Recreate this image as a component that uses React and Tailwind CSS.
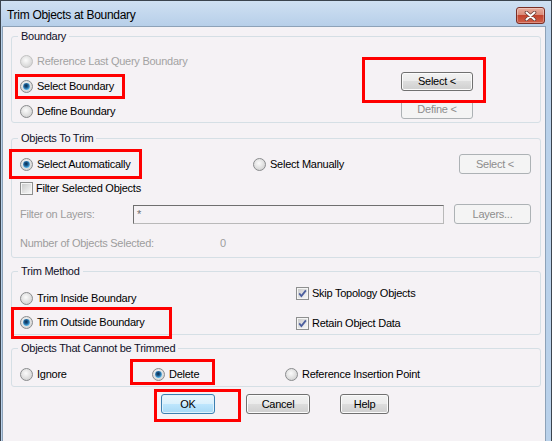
import clsx from 'clsx';

const Radio = ({ checked, disabled }) => (
  <svg width="13" height="13" viewBox="0 0 13 13" className="shrink-0">
    <defs>
      <radialGradient id="rfill" cx="45%" cy="40%" r="65%">
        <stop offset="0" stopColor="#fbfbfb" />
        <stop offset="1" stopColor="#cfcfcf" />
      </radialGradient>
      <radialGradient id="rdot" cx="45%" cy="40%" r="60%">
        <stop offset="0" stopColor="#0b2a48" />
        <stop offset="0.5" stopColor="#1d5e93" />
        <stop offset="1" stopColor="#5bbcf0" />
      </radialGradient>
    </defs>
    <circle cx="6.5" cy="6.5" r="6" fill="url(#rfill)" stroke={disabled ? '#c2c2c2' : '#8a8c8e'} />
    {checked && <circle cx="6.5" cy="6.5" r="3.4" fill="url(#rdot)" />}
  </svg>
);

const Checkbox = ({ checked }) => (
  <svg width="13" height="13" viewBox="0 0 13 13" className="shrink-0">
    <defs>
      <linearGradient id="cbfill" x1="0" y1="0" x2="1" y2="1">
        <stop offset="0" stopColor="#cbcbcb" />
        <stop offset="1" stopColor="#f7f7f7" />
      </linearGradient>
    </defs>
    <rect x="0.5" y="0.5" width="12" height="12" fill="#f5f5f5" stroke="#8e8f8f" />
    <rect x="2" y="2" width="9" height="9" fill="url(#cbfill)" />
    {checked && (
      <path d="M3.2 6.4 L5.4 9 L9.9 3.4" fill="none" stroke="#4c5f9e" strokeWidth="1.8" />
    )}
  </svg>
);

const RadioRow = ({ label, checked, disabled }) => (
  <div className="flex h-[20px] items-center gap-[4px]">
    <Radio checked={checked} disabled={disabled} />
    <span className={clsx('whitespace-nowrap', disabled ? 'text-[#a3a3a3]' : 'text-black')}>{label}</span>
  </div>
);

const CheckRow = ({ label, checked }) => (
  <div className="flex h-[20px] items-center gap-[3px]">
    <Checkbox checked={checked} />
    <span className="whitespace-nowrap text-black">{label}</span>
  </div>
);

const Btn = ({ children, disabled, focused, className }) => (
  <div
    className={clsx(
      'flex items-center justify-center rounded-[3px] border whitespace-nowrap',
      disabled && 'border-[#adb2b5] bg-[#f4f4f4] text-[#8d8d8d]',
      focused &&
        'border-[#3c7fb1] bg-[linear-gradient(#eaf6fd,#d9f0fc_50%,#bee6fd_50%,#a7d9f5)] text-black shadow-[inset_0_0_0_1px_#dff2fc]',
      !disabled &&
        !focused &&
        'border-[#707070] bg-[linear-gradient(#f2f2f2,#ebebeb_50%,#dddddd_50%,#cfcfcf)] text-black shadow-[inset_0_0_0_1px_#fbfbfb]',
      className
    )}
  >
    {children}
  </div>
);

const Group = ({ title, className, children }) => (
  <fieldset className={clsx('m-0 min-w-0 rounded-[3px] border border-[#d5dfe5] p-0', className)}>
    <legend className="ml-[6px] h-[14px] px-[3px] leading-[14px] text-[#101028]">{title}</legend>
    {children}
  </fieldset>
);

const Mark = ({ className }) => (
  <div className={clsx('pointer-events-none absolute border-[3px] border-[#ff0000]', className)} />
);

export default function App() {
  return (
    <div className="relative flex h-[441px] w-[552px] flex-col overflow-hidden border-x border-t border-[#3b444e] bg-[#b9d1ea] font-['Liberation_Sans',Arial,sans-serif] text-[11px] leading-[13px] tracking-[-0.25px]">
      {/* title bar */}
      <div className="flex h-[25px] items-start justify-between bg-gradient-to-b from-[#cfe0f2] to-[#b7cfe9] pl-[6px] pr-[6px]">
        <span className="mt-[8px] text-[12px] tracking-[-0.3px] text-black">Trim Objects at Boundary</span>
        <div className="mt-[6px] flex h-[17px] w-[29px] items-center justify-center rounded-[3px] border border-[#7a2e25] bg-[linear-gradient(#e8ac9d,#d98b79_45%,#c2432d_50%,#d0604a)] shadow-[inset_0_0_0_1px_rgba(255,255,255,0.3)]">
          <svg width="13" height="10" viewBox="0 0 13 10">
            <path d="M2.5 1.5 L10.5 8.5 M10.5 1.5 L2.5 8.5" stroke="#6a3d37" strokeWidth="3.6" strokeLinecap="round" />
            <path d="M2.5 1.5 L10.5 8.5 M10.5 1.5 L2.5 8.5" stroke="#ffffff" strokeWidth="2" strokeLinecap="round" />
          </svg>
        </div>
      </div>

      {/* client area */}
      <div className="ml-[1px] mr-[5px] flex flex-1 flex-col border-x border-t border-[#8da2b8] bg-[#f5f2f5] pl-[8px] pr-[4px]">
        <Group title="Boundary" className="mt-[2px]">
          <div className="flex pb-[1px]">
            <div className="flex w-[389px] flex-col gap-[5px] pl-[8px] pt-[8px]">
              <RadioRow disabled label="Reference Last Query Boundary" />
              <RadioRow checked label="Select Boundary" />
              <RadioRow label="Define Boundary" />
            </div>
            <div className="flex flex-col gap-[9px] pt-[29px]">
              <Btn className="h-[19px] w-[72px]">Select &lt;</Btn>
              <Btn disabled className="h-[19px] w-[72px]">Define &lt;</Btn>
            </div>
          </div>
        </Group>

        <Group title="Objects To Trim" className="mt-[8px]">
          <div className="flex flex-col pb-[4px] pl-[8px] pr-[9px] pt-[9px]">
            <div className="flex h-[20px] items-center">
              <div className="w-[233px]">
                <RadioRow checked label="Select Automatically" />
              </div>
              <RadioRow label="Select Manually" />
              <Btn disabled className="ml-auto h-[20px] w-[72px]">Select &lt;</Btn>
            </div>
            <div className="mt-[4px]">
              <CheckRow label="Filter Selected Objects" />
            </div>
            <div className="mt-[6px] flex h-[20px] items-center">
              <span className="w-[113px] text-[#9d9d9d]">Filter on Layers:</span>
              <div className="flex h-[19px] w-[311px] items-center border border-[#6f6f6f] border-b-[#b9b9b9] border-r-[#b9b9b9] pl-[3px] text-[#6d6d6d]">*</div>
              <Btn disabled className="ml-auto h-[20px] w-[77px]">Layers...</Btn>
            </div>
            <div className="mt-[9px] flex h-[20px] items-center text-[#9d9d9d]">
              <span className="w-[200px]">Number of Objects Selected:</span>
              <span>0</span>
            </div>
          </div>
        </Group>

        <Group title="Trim Method" className="mt-[6px]">
          <div className="flex pb-[1px]">
            <div className="flex w-[284px] flex-col gap-[4px] pl-[8px] pt-[10px]">
              <RadioRow label="Trim Inside Boundary" />
              <RadioRow checked label="Trim Outside Boundary" />
            </div>
            <div className="flex flex-col gap-[10px] pt-[5px]">
              <CheckRow checked label="Skip Topology Objects" />
              <CheckRow checked label="Retain Object Data" />
            </div>
          </div>
        </Group>

        <Group title="Objects That Cannot be Trimmed" className="mt-[6px]">
          <div className="mb-[2px] mt-[9px] flex h-[20px] items-center pl-[8px]">
            <div className="w-[132px]">
              <RadioRow label="Ignore" />
            </div>
            <div className="w-[133px]">
              <RadioRow checked label="Delete" />
            </div>
            <RadioRow label="Reference Insertion Point" />
          </div>
        </Group>

        <div className="mt-[7px] flex pl-[150px]">
          <Btn focused className="h-[20px] w-[54px]">OK</Btn>
          <Btn className="ml-[31px] h-[20px] w-[64px]">Cancel</Btn>
          <Btn className="ml-[30px] h-[20px] w-[49px]">Help</Btn>
        </div>
      </div>

      {/* red annotation boxes */}
      <Mark className="left-[14px] top-[73px] h-[25px] w-[110px]" />
      <Mark className="left-[361px] top-[56px] h-[46px] w-[124px]" />
      <Mark className="left-[8px] top-[148px] h-[30px] w-[133px]" />
      <Mark className="left-[10px] top-[306px] h-[32px] w-[161px]" />
      <Mark className="left-[129px] top-[358px] h-[26px] w-[85px]" />
      <Mark className="left-[153px] top-[388px] h-[33px] w-[87px]" />
    </div>
  );
}
